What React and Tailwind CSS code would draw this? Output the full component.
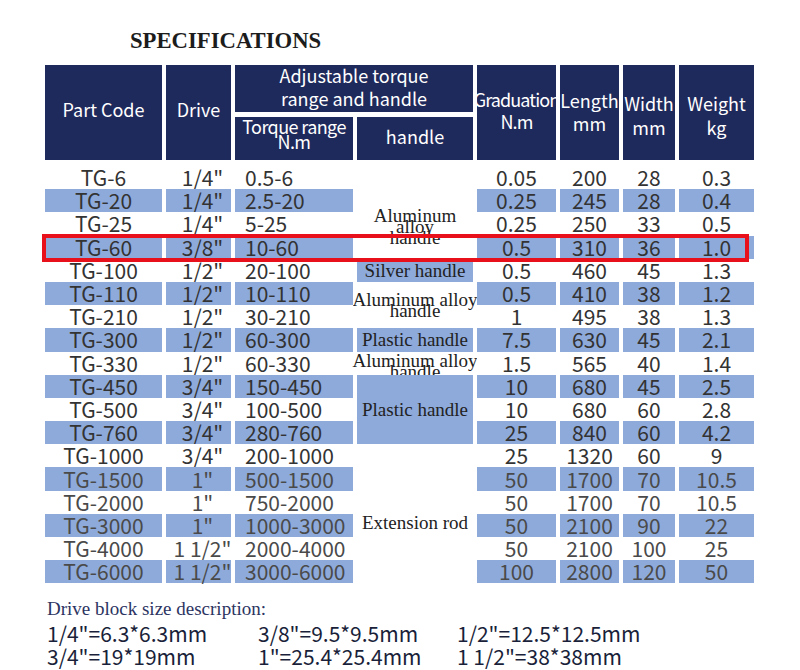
import React from 'react'

const rows = [
  ['TG-6', '1/4"', '0.5-6', '0.05', '200', '28', '0.3'],
  ['TG-20', '1/4"', '2.5-20', '0.25', '245', '28', '0.4'],
  ['TG-25', '1/4"', '5-25', '0.25', '250', '33', '0.5'],
  ['TG-60', '3/8"', '10-60', '0.5', '310', '36', '1.0'],
  ['TG-100', '1/2"', '20-100', '0.5', '460', '45', '1.3'],
  ['TG-110', '1/2"', '10-110', '0.5', '410', '38', '1.2'],
  ['TG-210', '1/2"', '30-210', '1', '495', '38', '1.3'],
  ['TG-300', '1/2"', '60-300', '7.5', '630', '45', '2.1'],
  ['TG-330', '1/2"', '60-330', '1.5', '565', '40', '1.4'],
  ['TG-450', '3/4"', '150-450', '10', '680', '45', '2.5'],
  ['TG-500', '3/4"', '100-500', '10', '680', '60', '2.8'],
  ['TG-760', '3/4"', '280-760', '25', '840', '60', '4.2'],
  ['TG-1000', '3/4"', '200-1000', '25', '1320', '60', '9'],
  ['TG-1500', '1"', '500-1500', '50', '1700', '70', '10.5'],
  ['TG-2000', '1"', '750-2000', '50', '1700', '70', '10.5'],
  ['TG-3000', '1"', '1000-3000', '50', '2100', '90', '22'],
  ['TG-4000', '1 1/2"', '2000-4000', '50', '2100', '100', '25'],
  ['TG-6000', '1 1/2"', '3000-6000', '100', '2800', '120', '50'],
]

// handle column: merged cells, keyed by the row they start on
const handles = {
  0: { span: 'row-span-4', lines: ['Aluminum', 'alloy', 'handle'], blue: false, pad: 'pt-[28px]' },
  4: { span: 'row-span-1', lines: ['Silver handle'], blue: true, pad: '' },
  5: { span: 'row-span-2', lines: ['Aluminum alloy', 'handle'], blue: false, pad: '' },
  7: { span: 'row-span-1', lines: ['Plastic handle'], blue: true, pad: '' },
  8: { span: 'row-span-1', lines: ['Aluminum alloy', 'handle'], blue: false, pad: 'pt-[6px]' },
  9: { span: 'row-span-3', lines: ['Plastic handle'], blue: true, pad: '' },
  12: { span: 'row-span-6', lines: ['Extension rod'], blue: false, pad: 'pt-[18px]' },
}

const cols = 'grid-cols-[117px_65px_118px_116px_79px_59px_52px_75px]'
const navy = 'bg-[#1f2a5c] text-white flex items-center justify-center text-center'

function HandleCell({ h }) {
  return (
    <div
      className={`${h.span} ${h.pad} ${h.blue ? 'bg-[#8eaadb]' : 'bg-white'} flex items-center justify-center text-center whitespace-nowrap text-[19px] text-[#222] ${h.lines.length > 1 ? 'leading-[11px]' : 'leading-none'}`}
      style={{ fontFamily: '"Liberation Serif", serif' }}
    >
      <div>
        {h.lines.map((l, i) => (
          <div key={i}>{l}</div>
        ))}
      </div>
    </div>
  )
}

export default function App() {
  return (
    <div className="w-[800px] h-[670px] bg-white relative overflow-hidden">
      <div className="h-[65px] pl-[130px] pt-[30px]">
        <h1
          className="text-[22.7px] font-bold leading-none text-[#1c1c1c]"
          style={{ fontFamily: '"Liberation Serif", serif' }}
        >
          SPECIFICATIONS
        </h1>
      </div>

      <div className="ml-[45px]" style={{ fontFamily: '"Noto Sans CJK SC", "Noto Sans", sans-serif' }}>
        {/* header */}
        <div className={`grid ${cols} grid-rows-[47px_43px] gap-x-[4px] gap-y-[5px] text-[18px]`}>
          <div className={`${navy} row-span-2 pb-[7px]`}>Part Code</div>
          <div className={`${navy} row-span-2 pb-[7px]`}>Drive</div>
          <div className={`${navy} col-span-2 leading-[23px] pb-[4px]`}>
            Adjustable torque<br />range and handle
          </div>
          <div className={`${navy} row-span-2 leading-[22px] pb-[6px] whitespace-nowrap tracking-[-0.9px]`}>
            Graduation<br />N.m
          </div>
          <div className={`${navy} row-span-2 leading-[23px] pb-[2px]`}>
            Length<br />mm
          </div>
          <div className={`${navy} row-span-2 leading-[24px] pt-[4px]`}>
            Width<br />mm
          </div>
          <div className={`${navy} row-span-2 leading-[24px] pt-[4px]`}>
            Weight<br />kg
          </div>
          <div className={`${navy} leading-[15px] pb-[10px] tracking-[-0.6px] whitespace-nowrap`}>
            Torque range<br />N.m
          </div>
          <div className={`${navy} pb-[5px]`}>handle</div>
        </div>

        {/* body */}
        <div className="relative mt-[6px]">
          <div className={`grid ${cols} grid-rows-[repeat(18,23.2px)] gap-x-[4px] text-[21px] leading-none`}>
            {rows.map((r, i) => {
              const band = i % 2 === 1 ? 'bg-[#8eaadb]' : 'bg-white'
              const tone = i >= 13 ? 'text-[#4a4a4a]' : 'text-[#333]'
              const cell = `${band} ${tone} flex items-center`
              return (
                <React.Fragment key={r[0]}>
                  <div className={`${cell} justify-center`}>{r[0]}</div>
                  <div className={`${cell} justify-center pl-[8px] whitespace-nowrap`}>{r[1]}</div>
                  <div className={`${cell} pl-[10px] ${i === 17 ? 'text-[#1f2b6a]' : ''}`}>{r[2]}</div>
                  {handles[i] && <HandleCell h={handles[i]} />}
                  <div className={`${cell} justify-center`}>{r[3]}</div>
                  <div className={`${cell} justify-center`}>{r[4]}</div>
                  <div className={`${cell} justify-center`}>{r[5]}</div>
                  <div className={`${cell} justify-center`}>{r[6]}</div>
                </React.Fragment>
              )
            })}
          </div>
          {/* highlighted TG-60 row */}
          <div className="absolute left-[-3px] top-[68px] w-[707px] h-[28px] border-4 border-[#e8101a] pointer-events-none" />
        </div>
      </div>

      <div className="pl-[47px] mt-[16px]">
        <div
          className="text-[19px] leading-none text-[#2c3461]"
          style={{ fontFamily: '"Liberation Serif", serif' }}
        >
          Drive block size description:
        </div>
        <div
          className="grid grid-cols-[211px_199px_auto] text-[21px] leading-[23px] text-[#1a1f3a] mt-[4px]"
          style={{ fontFamily: '"Noto Sans CJK SC", "Noto Sans", sans-serif' }}
        >
          <div>1/4"=6.3*6.3mm</div>
          <div>3/8"=9.5*9.5mm</div>
          <div>1/2"=12.5*12.5mm</div>
          <div>3/4"=19*19mm</div>
          <div>1"=25.4*25.4mm</div>
          <div>1 1/2"=38*38mm</div>
        </div>
      </div>
    </div>
  )
}
